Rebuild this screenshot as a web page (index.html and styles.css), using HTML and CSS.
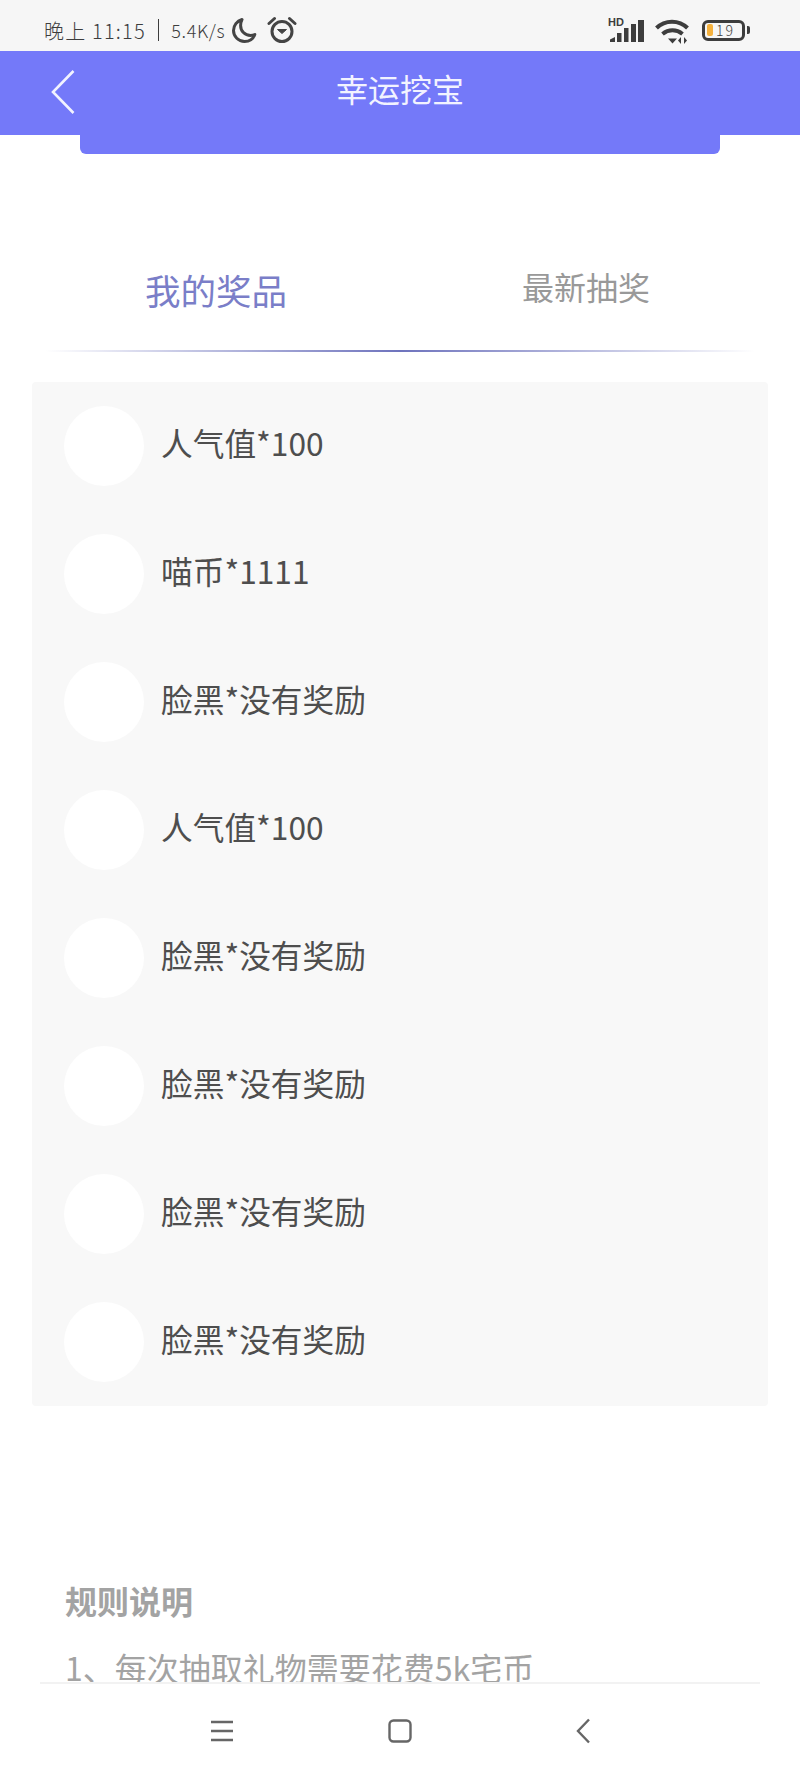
FILE: index.html
```html
<!DOCTYPE html>
<html lang="zh-CN">
<head>
    <meta charset="UTF-8">
    <meta name="viewport" content="width=device-width, initial-scale=1.0">
    <title>幸运挖宝</title>
    <link rel="stylesheet" href="styles.css">
</head>
<body>
    <div class="status-bar">
        <div class="status-left">
            <span class="status-time">晚上 11:15</span>
            <span class="status-sep"></span>
            <span class="status-speed">5.4K/s</span>
            <svg class="icon-moon" width="26" height="27" viewBox="0 0 26 27"><path d="M11 2.500C6 4 2.500 8.500 2.500 13.500c0 6 5 11 11 11 4.700 0 8.800-2.800 10.300-7-1.300.6-2.700.9-4.200.9-5.800 0-10-4.400-10-10 0-2.100.5-4.100 1.400-5.900z" fill="none" stroke="#444" stroke-width="3" stroke-linejoin="round"/></svg>
            <svg class="icon-alarm" width="30" height="28" viewBox="0 0 30 28"><circle cx="15" cy="15.500" r="10" fill="none" stroke="#444" stroke-width="3"/><path d="M2 7.500 7.500 2.500M28 7.500 22.500 2.500" stroke="#444" stroke-width="3" stroke-linecap="round"/><path d="M10.500 13.500 15 17.500l4.500-4z" fill="#444" stroke="#444" stroke-linejoin="round"/></svg>
        </div>
        <div class="status-right">
            <div class="signal">
                <span class="signal-hd">HD</span>
                <svg width="38" height="24" viewBox="0 0 38 24"><path d="M2 24v-2.500L7 19v5zM9 24V15h4.500v9zM16 24V10h4.500v14zM23 24V6h5v18zM30 24V2h6v22z" fill="#3d3d3d"/></svg>
            </div>
            <svg class="icon-wifi" width="35" height="28" viewBox="0 0 35 28"><path d="M1.500 12C10 3.500 24 3.500 32.500 12" fill="none" stroke="#3d3d3d" stroke-width="4"/><path d="M7.500 18c6-5 14-5 20 0" fill="none" stroke="#3d3d3d" stroke-width="4"/><path d="M13 22.500h9l-4.500 5zM26 21v7l-3-3.500zM29 21v7l3-3.500z" fill="#3d3d3d"/></svg>
            <div class="battery">
                <div class="battery-body">
                    <span class="battery-fill"></span>
                    <span class="battery-num">19</span>
                </div>
                <span class="battery-tip"></span>
            </div>
        </div>
    </div>

    <header class="top-bar">
        <svg class="back" width="24" height="46" viewBox="0 0 24 46"><path d="M22.500 2 2 23l20.500 21" fill="none" stroke="#f2f3ff" stroke-width="2.600"/></svg>
        <h1>幸运挖宝</h1>
    </header>

    <main class="content">
        <div class="hero-tab"></div>

        <div class="tabs">
            <span class="tab tab-active">我的奖品</span>
            <span class="tab">最新抽奖</span>
        </div>
        <div class="tab-line"></div>

        <ul class="prize-list">
            <li class="prize"><span class="prize-pic"></span><span class="prize-name">人气值*100</span></li>
            <li class="prize"><span class="prize-pic"></span><span class="prize-name">喵币*1111</span></li>
            <li class="prize"><span class="prize-pic"></span><span class="prize-name">脸黑*没有奖励</span></li>
            <li class="prize"><span class="prize-pic"></span><span class="prize-name">人气值*100</span></li>
            <li class="prize"><span class="prize-pic"></span><span class="prize-name">脸黑*没有奖励</span></li>
            <li class="prize"><span class="prize-pic"></span><span class="prize-name">脸黑*没有奖励</span></li>
            <li class="prize"><span class="prize-pic"></span><span class="prize-name">脸黑*没有奖励</span></li>
            <li class="prize"><span class="prize-pic"></span><span class="prize-name">脸黑*没有奖励</span></li>
        </ul>

        <div class="rules">
            <h3>规则说明</h3>
            <p>1、每次抽取礼物需要花费5k宅币</p>
        </div>
    </main>

    <nav class="nav-bar">
        <svg width="24" height="22" viewBox="0 0 24 22"><path d="M1 2h22M1 11h22M1 20h22" stroke="#666" stroke-width="2.400"/></svg>
        <svg width="24" height="24" viewBox="0 0 24 24"><rect x="1.500" y="1.500" width="21" height="21" rx="4" fill="none" stroke="#666" stroke-width="2.400"/></svg>
        <svg class="nav-back" width="14" height="26" viewBox="0 0 14 26"><path d="M13 1.500 2 13l11 11.500" fill="none" stroke="#666" stroke-width="2.400"/></svg>
    </nav>
</body>
</html>
```

FILE: styles.css
```css
* {
    box-sizing: border-box;
}

body {
    display: flex;
    flex-direction: column;
    height: 1778px;
    margin: 0;
    overflow: hidden;
    background-color: #fff;
    font-family: "Noto Sans CJK SC", "Noto Sans", sans-serif;
}

/* status bar */
.status-bar {
    display: flex;
    justify-content: space-between;
    align-items: center;
    flex-shrink: 0;
    height: 51px;
    padding: 9px 50px 0 44px;
    background-color: #f6f6f6;
    color: #3d3d3d;
}

.status-left,
.status-right {
    display: flex;
    align-items: center;
}

.status-time {
    font-size: 20px;
    font-weight: 300;
    letter-spacing: 1.200px;
    white-space: nowrap;
}

.status-sep {
    width: 1.500px;
    height: 22px;
    margin: 0 12px;
    background-color: #3d3d3d;
}

.status-speed {
    font-size: 18px;
    font-weight: 300;
    letter-spacing: .6px;
}

.icon-moon {
    margin-left: 6px;
}

.icon-alarm {
    margin-left: 10px;
}

.signal {
    position: relative;
    width: 38px;
    height: 24px;
}

.signal svg {
    display: block;
}

.signal-hd {
    position: absolute;
    top: -2px;
    left: 0;
    font-family: "Liberation Sans", sans-serif;
    font-size: 11px;
    font-weight: 700;
    line-height: 12px;
}

.icon-wifi {
    margin-left: 9px;
}

.battery {
    display: flex;
    align-items: center;
    margin-left: 12px;
}

.battery-body {
    display: flex;
    align-items: center;
    width: 43px;
    height: 21px;
    padding: 0 2px;
    border: 3px solid #3d3d3d;
    border-radius: 6px;
}

.battery-fill {
    width: 6px;
    height: 12px;
    border-radius: 2px;
    background-color: #f5b13d;
}

.battery-num {
    margin-left: 3px;
    font-size: 14px;
    font-weight: 300;
    letter-spacing: 2px;
    line-height: 1;
}

.battery-tip {
    width: 3px;
    height: 8px;
    margin-left: 2px;
    border-radius: 0 2px 2px 0;
    background-color: #3d3d3d;
}

/* top bar */
.top-bar {
    display: flex;
    align-items: center;
    justify-content: center;
    position: relative;
    flex-shrink: 0;
    height: 84px;
    background-color: #7479f9;
}

.back {
    position: absolute;
    top: 18px;
    left: 51px;
}

.top-bar h1 {
    margin: 0 0 10px;
    color: #f2f3ff;
    font-size: 32px;
    font-weight: 400;
}

/* page content */
.content {
    flex: 1;
    min-height: 0;
    overflow: hidden;
}

.hero-tab {
    height: 19px;
    margin: 0 80px;
    border-radius: 0 0 6px 6px;
    background-color: #7479f9;
}

.tabs {
    display: flex;
    align-items: flex-start;
    gap: 235px;
    height: 196px;
    padding: 110px 0 0 145px;
}

.tab {
    color: #999;
    font-size: 32px;
    line-height: 44px;
}

.tab-active {
    margin-top: 3px;
    color: #7a7ec8;
    font-size: 35.500px;
    line-height: 46px;
}

.tab-line {
    height: 2px;
    margin: 0 45px;
    background: linear-gradient(90deg, rgba(110, 115, 190, 0), #6e73bd 50%, rgba(110, 115, 190, 0));
}

.prize-list {
    margin: 30px 32px 0;
    padding: 0;
    list-style: none;
    border-radius: 4px;
    background-color: #f8f8f8;
}

.prize {
    display: flex;
    align-items: center;
    gap: 17px;
    height: 128px;
    padding-left: 32px;
    color: #4e4e4e;
    font-size: 31.700px;
}

.prize-name {
    margin-bottom: 8px;
}

.prize-pic {
    width: 80px;
    height: 80px;
    border-radius: 50%;
    background-color: #fff;
}

.rules {
    padding: 171px 65px 0;
    color: #a3a3a3;
}

.rules h3 {
    margin: 0;
    font-size: 32px;
    font-weight: 700;
    line-height: 46px;
}

.rules p {
    margin: 21px 0 0;
    font-size: 32px;
    line-height: 46px;
    white-space: nowrap;
}

/* bottom nav */
.nav-bar {
    display: flex;
    align-items: center;
    justify-content: center;
    gap: 154px;
    flex-shrink: 0;
    height: 96px;
    margin: 0 40px;
    border-top: 2px solid #f2f2f2;
    background-color: #fff;
}

.nav-back {
    margin-left: 10px;
}
```
